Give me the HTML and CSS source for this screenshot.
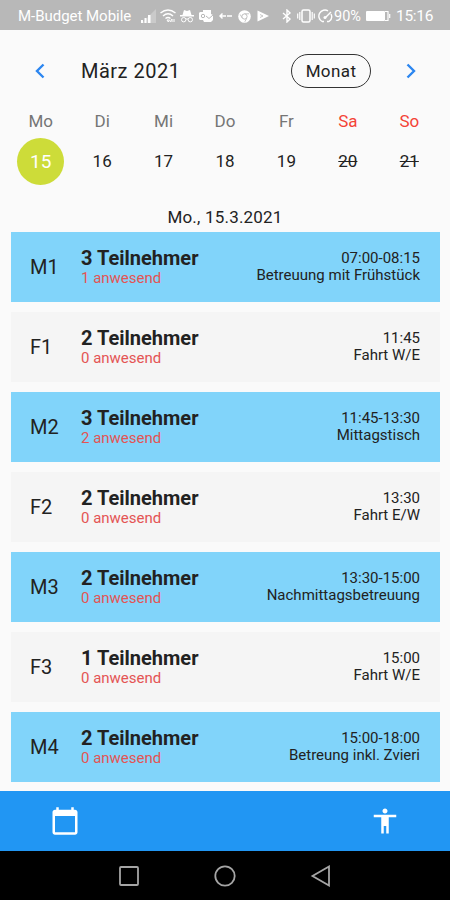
FILE: index.html
```html
<!DOCTYPE html>
<html lang="de">
<head>
<meta charset="utf-8">
<title>Kalender</title>
<link rel="stylesheet" href="styles.css">
</head>
<body>
<div class="statusbar">
  <span class="carrier">M-Budget Mobile</span>
  <svg class="st-signal" width="16" height="14" viewBox="0 0 16 14"><path d="M15 0V14H1Z" fill="#fff" opacity=".25"/><path d="M0 11h2v3H0zM3.500 9h2v5h-2zM7 6h2.500v8H7z" fill="#fff"/></svg>
  <svg class="st-wifi" width="16" height="14" viewBox="0 0 16 14" fill="none" stroke="#fff" stroke-width="1.500"><path d="M.5 4Q8-2 15.500 4M3 7Q8 2.500 13 7M5.500 9.500Q8 7.500 10.500 9.500"/><path d="M7 11h2.500l-1.200 2zM10 13l2-3v3M14 10v3" stroke-width="1"/></svg>
  <svg class="st-spy" width="14" height="14" viewBox="0 0 14 14"><path d="M4 1 7 2l3-1 1.500 5H14v1.500H0V6h2.500z" fill="#fff"/><g fill="none" stroke="#fff" stroke-width="1"><circle cx="3.700" cy="10.700" r="2.200"/><circle cx="10.300" cy="10.700" r="2.200"/><path d="M6 10h2"/></g></svg>
  <svg class="st-mail" width="14" height="14" viewBox="0 0 14 14"><path d="M4 1h8v4l2 1v5l-2 2H5l-1-2H1L0 10V4l1-1h3z" fill="#fff"/><circle cx="4" cy="7" r="1.700" fill="none" stroke="#b8b8b8"/><path d="m7 7 3 2.500L14 6" fill="none" stroke="#b8b8b8"/></svg>
  <svg class="st-arrow" width="13" height="8" viewBox="0 0 13 8"><path d="M1 4h6M8 4h5M3.500 1.500 1 4l2.500 2.500" fill="none" stroke="#fff" stroke-width="1.500"/></svg>
  <svg class="st-chrome" width="13" height="13" viewBox="0 0 13 13"><circle cx="6.500" cy="6.500" r="6.300" fill="#fff"/><path d="M6.500 3.800h4.500M4.200 8 2.200 4.500M8.800 8l-2 3.800" stroke="#b8b8b8" stroke-width=".8"/><circle cx="6.500" cy="6.500" r="2.600" fill="#fff" stroke="#b8b8b8" stroke-width=".9"/></svg>
  <svg class="st-play" width="12" height="12" viewBox="0 0 12 12"><path d="M.5.500 12 6 .5 11.500z" fill="#fff"/><path d="m3 4.500 3 1.500-3 1.500" fill="none" stroke="#b8b8b8" stroke-width=".8"/></svg>
  <svg class="st-bt" width="10" height="14" viewBox="0 0 10 14"><path d="m1 4 7 6-3 3V1l3 3-7 6" fill="none" stroke="#fff" stroke-width="1.400"/></svg>
  <svg class="st-vib" width="18" height="14" viewBox="0 0 18 14"><rect x="5" y="1" width="8" height="12" rx="1.500" fill="none" stroke="#fff" stroke-width="1.500"/><path d="M2.800 3v8M.7 4.500v5M15.200 3v8M17.300 4.500v5" stroke="#fff" stroke-width="1.200"/></svg>
  <svg class="st-gauge" width="17" height="14" viewBox="0 0 17 14"><path d="M5 12.500A6 6 0 1 1 11 1.800M14 5a6 6 0 0 1-2 7.500M8 9l6-6M5 12.500h2m3 0h2" fill="none" stroke="#fff" stroke-width="1.400"/><circle cx="8" cy="8.500" r="1.500" fill="#fff"/></svg>
  <span class="percent">90%</span>
  <svg class="st-batt" width="25" height="12" viewBox="0 0 25 12"><rect x="0" y="1" width="19" height="10" rx="1" fill="#fff"/><path d="M19 1.500h3v9h-3M23.700 4v4" fill="none" stroke="#fff" stroke-width="1.200"/></svg>
  <span class="clock">15:16</span>
</div>

<main class="content">
  <header class="month">
    <svg class="prev" width="10" height="16" viewBox="0 0 10 16"><path d="M8.500 1.500 2 8l6.500 6.500"/></svg>
    <h1>März 2021</h1>
    <button class="mode">Monat</button>
    <svg class="next" width="10" height="16" viewBox="0 0 10 16"><path d="M1.500 1.500 8 8l-6.500 6.500"/></svg>
  </header>
  <div class="week names"><span>Mo</span><span>Di</span><span>Mi</span><span>Do</span><span>Fr</span><span class="we">Sa</span><span class="we">So</span></div>
  <div class="week days"><span class="selected">15</span><span>16</span><span>17</span><span>18</span><span>19</span><span class="off">20</span><span class="off">21</span></div>
  <div class="date">Mo., 15.3.2021</div>
  <div class="list">
    <div class="row blue"><div class="code">M1</div><div class="who"><b>3 Teilnehmer</b><small>1 anwesend</small></div><div class="what">07:00-08:15<br>Betreuung mit Frühstück</div></div>
    <div class="row"><div class="code">F1</div><div class="who"><b>2 Teilnehmer</b><small>0 anwesend</small></div><div class="what">11:45<br>Fahrt W/E</div></div>
    <div class="row blue"><div class="code">M2</div><div class="who"><b>3 Teilnehmer</b><small>2 anwesend</small></div><div class="what">11:45-13:30<br>Mittagstisch</div></div>
    <div class="row"><div class="code">F2</div><div class="who"><b>2 Teilnehmer</b><small>0 anwesend</small></div><div class="what">13:30<br>Fahrt E/W</div></div>
    <div class="row blue"><div class="code">M3</div><div class="who"><b>2 Teilnehmer</b><small>0 anwesend</small></div><div class="what">13:30-15:00<br>Nachmittagsbetreuung</div></div>
    <div class="row"><div class="code">F3</div><div class="who"><b>1 Teilnehmer</b><small>0 anwesend</small></div><div class="what">15:00<br>Fahrt W/E</div></div>
    <div class="row blue"><div class="code">M4</div><div class="who"><b>2 Teilnehmer</b><small>0 anwesend</small></div><div class="what">15:00-18:00<br>Betreung inkl. Zvieri</div></div>
  </div>
</main>

<nav class="tabs">
  <svg width="30" height="30" viewBox="0 0 24 24"><path d="M20 3h-1V1h-2v2H7V1H5v2H4c-1.100 0-2 .9-2 2v16c0 1.100.9 2 2 2h16c1.100 0 2-.9 2-2V5c0-1.100-.9-2-2-2zm0 18H4V8h16v13z"/></svg>
  <svg width="30" height="30" viewBox="0 0 24 24"><path d="M12 2c1.100 0 2 .9 2 2s-.9 2-2 2-2-.9-2-2 .9-2 2-2zm9 7h-6v13h-2v-6h-2v6H9V9H3V7h18v2z"/></svg>
</nav>
<div class="sysnav">
  <svg width="22" height="22" viewBox="0 0 22 22"><rect x="2" y="2" width="18" height="18" rx="1"/></svg>
  <svg width="22" height="22" viewBox="0 0 22 22"><circle cx="11" cy="11" r="9.700"/></svg>
  <svg width="22" height="22" viewBox="0 0 22 22"><path d="M19 1.500v19L2.500 11z"/></svg>
</div>
</body>
</html>
```
FILE: styles.css
```css
* { box-sizing: border-box; }
body {
  margin: 0;
  width: 450px;
  height: 900px;
  display: flex;
  flex-direction: column;
  overflow: hidden;
  background: #fafafa;
  color: #222;
  font-family: Roboto, sans-serif;
}
.statusbar {
  height: 30px;
  flex: none;
  display: flex;
  align-items: center;
  padding: 2px 0 0 18px;
  background: #b8b8b8;
  color: #fff;
  font-size: 15px;
  white-space: nowrap;
}
.statusbar svg { flex: none; }
.carrier { width: 123px; letter-spacing: -0.03px; }
.st-wifi { margin-left: 3px; }
.st-spy { margin-left: 4px; }
.st-mail { margin-left: 5px; }
.st-arrow { margin-left: 6px; }
.st-chrome { margin-left: 6px; }
.st-play { margin-left: 6px; }
.st-bt { margin-left: 13px; }
.st-vib { margin-left: 5px; }
.st-gauge { margin-left: 2px; }
.percent { width: 32px; font-size: 14.500px; }
.st-batt { width: 25px; }
.clock { margin-left: 5px; font-size: 15.500px; letter-spacing: -0.3px; }

.content { flex: 1; min-height: 0; }
.month {
  display: flex;
  align-items: center;
  height: 80px;
  padding: 1px 34px 0 35px;
}
.month svg { fill: none; stroke: #2c86f0; stroke-width: 2.400; }
.month h1 {
  margin: 0 auto 0 36px;
  font-size: 20px;
  font-weight: 400;
  letter-spacing: 0.5px;
}
.mode {
  width: 80px;
  height: 34px;
  padding: 0;
  margin-right: 35px;
  border: 1.500px solid #333;
  border-radius: 17px;
  background: transparent;
  color: #222;
  font: 17px Roboto, sans-serif;
  letter-spacing: 0.4px;
}
.week {
  display: grid;
  grid-template-columns: repeat(7, 1fr);
  padding: 0 10px;
  justify-items: center;
  align-items: center;
  font-size: 17px;
}
.names { height: 22px; color: #757575; }
.days { height: 58px; }
.we { color: #f44336; }
.off { text-decoration: line-through; }
.selected {
  width: 47px;
  height: 47px;
  border-radius: 50%;
  background: #cddc39;
  color: #fff;
  font-size: 19px;
  line-height: 47px;
  text-align: center;
}
.date {
  height: 42px;
  padding-top: 17px;
  text-align: center;
  font-size: 17px;
  line-height: 20px;
  letter-spacing: 0.2px;
}
.list { display: grid; gap: 10px; padding: 0 10px 0 11px; }
.row {
  height: 70px;
  display: flex;
  align-items: center;
  padding: 0 20px 0 19px;
  background: #f5f5f5;
}
.blue { background: #81d4fa; }
.code { width: 51px; font-size: 20px; }
.who { margin-right: auto; }
.who b { display: block; font-size: 20px; line-height: 22px; font-weight: 700; }
.who small { display: block; font-size: 15px; line-height: 19px; color: #e45454; }
.what { text-align: right; font-size: 15px; line-height: 17.500px; }

.tabs {
  flex: none;
  height: 60px;
  display: flex;
  align-items: center;
  justify-content: space-between;
  padding: 0 50px;
  background: #2196f3;
  fill: #fff;
}
.sysnav {
  flex: none;
  height: 49px;
  display: flex;
  align-items: center;
  justify-content: center;
  gap: 74px;
  background: #000;
  fill: none;
  stroke: #a5a5a5;
  stroke-width: 1.800;
}
```
